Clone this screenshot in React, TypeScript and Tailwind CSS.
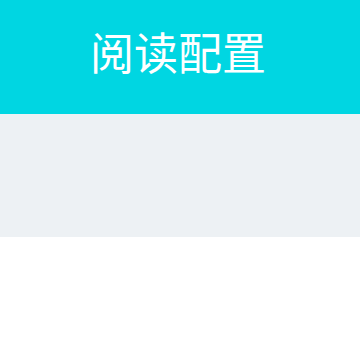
export default function App() {
  return (
    <div className="w-[360px] h-[360px] bg-white flex flex-col">
      <div className="h-[114px] bg-[#00d6e2] flex justify-center pt-[24px]">
        <span
          className="text-white text-[44px] leading-[54px] font-normal pr-[4px]"
          style={{ fontFamily: '"Noto Sans CJK SC", sans-serif' }}
        >
          阅读配置
        </span>
      </div>
      <div className="h-[123px] bg-[#edf1f4]" />
    </div>
  );
}
